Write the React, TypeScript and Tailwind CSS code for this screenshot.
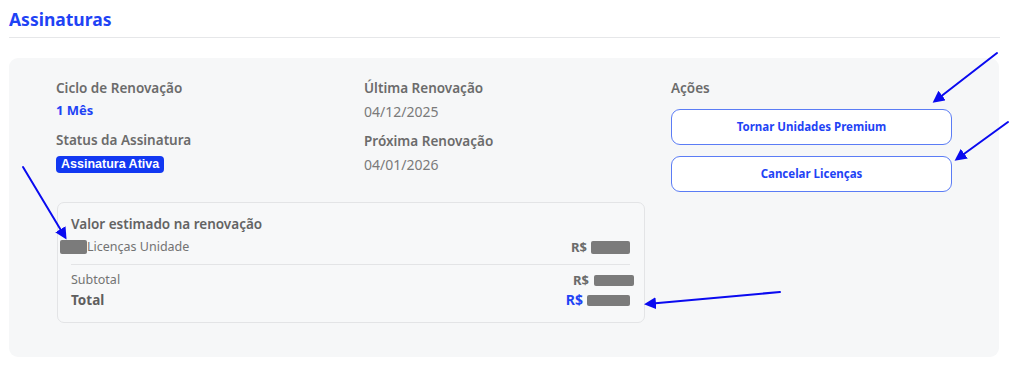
import React from "react"

const font = { fontFamily: '"Noto Sans", "Open Sans", sans-serif' }

function Redacted({ className }: { className: string }) {
  return <span className={`inline-block bg-[#7b7b7b] rounded-[2px] align-middle ${className}`} />
}

function Arrows() {
  const lines = [
    { x1: 997, y1: 53, x2: 935, y2: 101 },
    { x1: 1008, y1: 122, x2: 957, y2: 159 },
    { x1: 23, y1: 167, x2: 65, y2: 237 },
    { x1: 780, y1: 292, x2: 647, y2: 304 },
  ]
  return (
    <svg className="absolute left-0 top-0 pointer-events-none" width={1024} height={385}>
      <defs>
        <marker id="head" markerWidth="6" markerHeight="6" refX="4.5" refY="3" orient="auto" markerUnits="strokeWidth">
          <path d="M0,0 L6,3 L0,6 Z" fill="#0a0af0" />
        </marker>
      </defs>
      {lines.map((l, i) => (
        <line key={i} {...l} stroke="#0a0af0" strokeWidth={2} strokeLinecap="round" markerEnd="url(#head)" />
      ))}
    </svg>
  )
}

export default function App() {
  return (
    <div className="relative w-[1024px] h-[385px] bg-white overflow-hidden" style={font}>
      <div className="px-[9px] pt-[7px]">
        <h1 className="text-[17.5px] font-bold text-[#1f43f5] leading-[24px]">Assinaturas</h1>
        <div className="mt-[6px] h-px bg-[#e6e7e9] w-[991px]" />

        <div className="mt-[20px] w-[990px] h-[299px] bg-[#f6f7f8] rounded-[9px] pl-[47px] pt-[20px]">
          <div className="grid grid-cols-[308px_307px_281px]">
            <div>
              <div className="text-[13.5px] font-semibold text-[#6b6b6b] leading-[20px]">Ciclo de Renovação</div>
              <div className="mt-[2px] text-[13px] font-bold text-[#1f43f5] leading-[20px]">1 Mês</div>
              <div className="mt-[10px] text-[13.5px] font-semibold text-[#6b6b6b] leading-[20px]">Status da Assinatura</div>
              <span
                className="inline-block mt-[1px] bg-[#1238f2] text-white text-[12.5px] font-bold leading-[17px] px-[5px] rounded-[4px]"
                style={{ fontFamily: '"Liberation Sans", Arial, sans-serif' }}
              >
                Assinatura Ativa
              </span>
            </div>
            <div>
              <div className="text-[13.5px] font-semibold text-[#6b6b6b] leading-[20px]">Última Renovação</div>
              <div className="mt-[4px] text-[14px] text-[#7a7a7a] leading-[20px]">04/12/2025</div>
              <div className="mt-[9px] text-[13.5px] font-semibold text-[#6b6b6b] leading-[20px]">Próxima Renovação</div>
              <div className="mt-[4px] text-[14px] text-[#7a7a7a] leading-[20px]">04/01/2026</div>
            </div>
            <div>
              <div className="text-[13.5px] font-semibold text-[#6b6b6b] leading-[20px]">Ações</div>
              <div className="mt-[11px] flex flex-col gap-[11px]">
                <button className="h-[36px] w-full bg-white border border-[#5b7cf5] rounded-[9px] text-[11.5px] font-bold text-[#1f43f5]">
                  Tornar Unidades Premium
                </button>
                <button className="h-[36px] w-full bg-white border border-[#5b7cf5] rounded-[9px] text-[11.5px] font-bold text-[#1f43f5]">
                  Cancelar Licenças
                </button>
              </div>
            </div>
          </div>

          <div className="mt-[10px] ml-[1px] w-[588px] h-[121px] border border-[#e3e4e6] rounded-[7px] bg-[#f7f8f9] px-[13px] pt-[11px]">
            <div className="text-[13.5px] font-semibold text-[#636363] leading-[20px]">Valor estimado na renovação</div>
            <div className="mt-[3px] flex justify-between items-center text-[12.5px] text-[#737373] leading-[20px]">
              <span className="-ml-[11px] flex items-center">
                <Redacted className="w-[27px] h-[14px]" />
                Licenças Unidade
              </span>
              <span className="flex items-center gap-[4px] text-[13px] font-bold text-[#6b6b6b] pr-[1px]">
                R$ <Redacted className="w-[39px] h-[13px]" />
              </span>
            </div>
            <div className="mt-[7px] h-px bg-[#e3e4e6] w-[559px]" />
            <div className="mt-[6px] flex justify-between items-center text-[12.5px] text-[#737373] leading-[18px]">
              <span>Subtotal</span>
              <span className="flex items-center gap-[5px] text-[13px] font-bold text-[#6b6b6b] -mr-[3px]">
                R$ <Redacted className="w-[40px] h-[11px]" />
              </span>
            </div>
            <div className="flex justify-between items-center leading-[22px]">
              <span className="text-[13.5px] font-bold text-[#5f5f5f]">Total</span>
              <span className="flex items-center gap-[4px] text-[14px] font-bold text-[#1f43f5] pr-[1px]">
                R$ <Redacted className="w-[43px] h-[11px]" />
              </span>
            </div>
          </div>
        </div>
      </div>
      <Arrows />
    </div>
  )
}
